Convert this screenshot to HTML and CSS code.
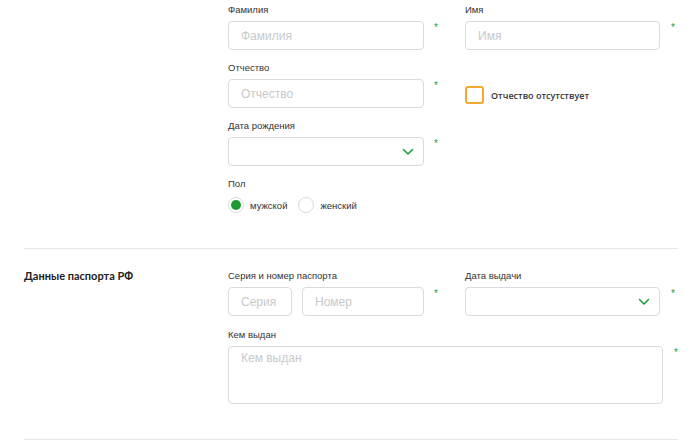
FILE: index.html
```html
<!DOCTYPE html>
<html lang="ru">
<head>
<meta charset="utf-8">
<link rel="stylesheet" href="styles.css">
</head>
<body>
<div class="page">
  <section class="section first">
    <div class="section-title"></div>
    <div class="fields">
      <div class="field">
        <label class="label">Фамилия</label>
        <div class="control">
          <input class="input w-a" placeholder="Фамилия">
          <span class="star">*</span>
        </div>
      </div>
      <div class="field">
        <label class="label">Имя</label>
        <div class="control">
          <input class="input w-b" placeholder="Имя">
          <span class="star">*</span>
        </div>
      </div>
      <div class="field">
        <label class="label">Отчество</label>
        <div class="control">
          <input class="input w-a" placeholder="Отчество">
          <span class="star">*</span>
        </div>
      </div>
      <div class="field">
        <div class="label"></div>
        <div class="control check-row">
          <span class="checkbox"></span>
          <span class="check-text">Отчество отсутствует</span>
        </div>
      </div>
      <div class="field">
        <label class="label">Дата рождения</label>
        <div class="control">
          <div class="select w-a">
            <svg class="chev" width="12" height="8" viewBox="0 0 12 8"><path d="M1.5 1.5 L6 6 L10.5 1.5" fill="none" stroke="#21a038" stroke-width="1.6" stroke-linecap="round" stroke-linejoin="round"/></svg>
          </div>
          <span class="star">*</span>
        </div>
      </div>
      <div class="field"></div>
      <div class="field">
        <label class="label">Пол</label>
        <div class="radios">
          <span class="radio checked"></span><span class="radio-text">мужской</span>
          <span class="radio"></span><span class="radio-text">женский</span>
        </div>
      </div>
    </div>
  </section>
  <section class="section">
    <div class="section-title">Данные паспорта РФ</div>
    <div class="fields passport">
      <div class="field">
        <label class="label">Серия и номер паспорта</label>
        <div class="control">
          <input class="input w-ser" placeholder="Серия">
          <input class="input w-num" placeholder="Номер">
          <span class="star">*</span>
        </div>
      </div>
      <div class="field">
        <label class="label">Дата выдачи</label>
        <div class="control">
          <div class="select w-b">
            <svg class="chev" width="12" height="8" viewBox="0 0 12 8"><path d="M1.5 1.5 L6 6 L10.5 1.5" fill="none" stroke="#21a038" stroke-width="1.6" stroke-linecap="round" stroke-linejoin="round"/></svg>
          </div>
          <span class="star">*</span>
        </div>
      </div>
      <div class="field span">
        <label class="label">Кем выдан</label>
        <div class="control">
          <textarea class="input area" placeholder="Кем выдан"></textarea>
          <span class="star">*</span>
        </div>
      </div>
    </div>
  </section>
</div>
</body>
</html>
```
FILE: styles.css
```css
* { box-sizing: border-box; }
html, body { margin: 0; background: #fff; }
body {
  font-family: "Liberation Sans", Arial, sans-serif;
  color: #333;
}
.page { width: 700px; }
.section {
  display: flex;
  margin: 0 22px 0 24px;
  padding: 20px 0 35px;
  border-bottom: 1px solid #e6e6e6;
}
.section.first { padding-top: 3px; padding-bottom: 35px; }
.section-title {
  width: 204px;
  flex: none;
  font-family: Lato, "Open Sans", sans-serif;
  font-weight: 700;
  font-size: 11px;
  line-height: 14px;
  color: #222;
}
.fields {
  display: grid;
  grid-template-columns: 237px 215px;
  row-gap: 11px;
}
.fields.passport { row-gap: 12px; }
.field.span { grid-column: 1 / 3; }
.label {
  display: block;
  font-size: 9.5px;
  line-height: 14px;
  height: 14px;
  margin-bottom: 4px;
  color: #333;
}
.control { display: flex; align-items: flex-start; }
.input {
  height: 29px;
  border: 1px solid #dadada;
  border-radius: 4px;
  padding: 0 12px;
  font-family: "Liberation Sans", Arial, sans-serif;
  font-size: 12px;
  color: #333;
  background: #fff;
  outline: none;
}
.input::placeholder { color: #c9c9c9; }
.w-a { width: 196px; }
.w-b { width: 195px; }
.w-ser { width: 64px; margin-right: 10px; }
.w-num { width: 122px; }
.area {
  width: 435px;
  height: 58px;
  padding-top: 4px;
  resize: none;
  display: block;
}
.star {
  color: #21a038;
  font-size: 10px;
  line-height: 10px;
  margin: 2px 0 0 10px;
}
.w-b + .star, .area + .star { margin-left: 11px; }
.select {
  height: 29px;
  border: 1px solid #dadada;
  border-radius: 4px;
  display: flex;
  align-items: center;
  justify-content: flex-end;
  padding-right: 9px;
}
.chev { display: block; margin-top: 1px; }
.check-row { align-items: center; height: 29px; padding-top: 3px; }
.checkbox {
  width: 19px;
  height: 18px;
  border: 2px solid #f8a731;
  border-radius: 3px;
  flex: none;
}
.check-text {
  margin-left: 7px;
  font-family: "Open Sans", sans-serif;
  font-weight: 600;
  font-size: 9px;
  color: #333;
}
.radios {
  display: flex;
  align-items: center;
  margin-top: 6px;
  height: 16px;
}
.radio {
  width: 16px;
  height: 16px;
  border: 1px solid #dadada;
  border-radius: 50%;
  flex: none;
  display: flex;
  align-items: center;
  justify-content: center;
}
.radio.checked::after {
  content: "";
  width: 10px;
  height: 10px;
  border-radius: 50%;
  background: #1f9a2e;
}
.radio-text {
  font-size: 9.5px;
  margin: 0 11px 0 6px;
  color: #333;
}
```
